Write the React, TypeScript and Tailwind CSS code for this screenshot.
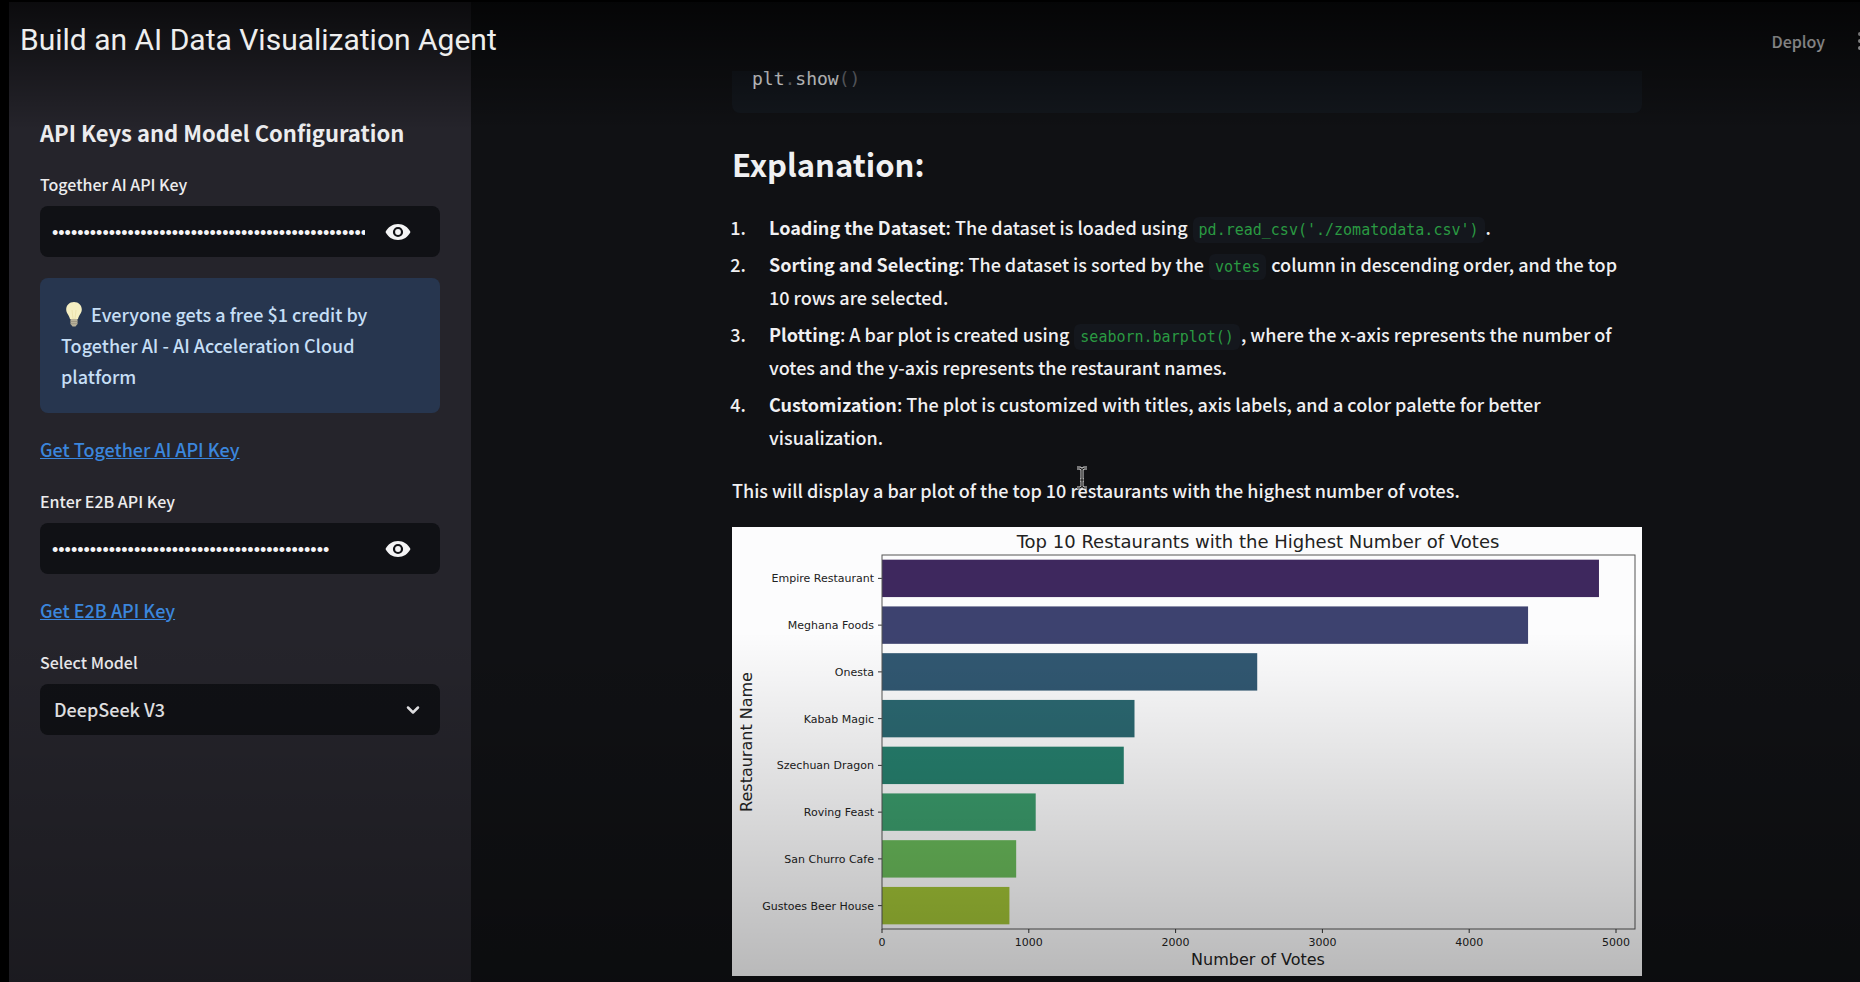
import React from "react";
import { ChevronDown } from "lucide-react";

const restaurants = [
  { name: "Empire Restaurant", votes: 4884, color: "#3e285e" },
  { name: "Meghana Foods", votes: 4401, color: "#3d426f" },
  { name: "Onesta", votes: 2556, color: "#315872" },
  { name: "Kabab Magic", votes: 1720, color: "#2b6871" },
  { name: "Szechuan Dragon", votes: 1647, color: "#26806e" },
  { name: "Roving Feast", votes: 1047, color: "#3b9c6c" },
  { name: "San Churro Cafe", votes: 914, color: "#69b95a" },
  { name: "Gustoes Beer House", votes: 868, color: "#a0c136" },
];

const PLOT = { left: 150, right: 903, top: 28, bottom: 402 };
const xScale = (votes: number) => PLOT.left + votes * 0.1468;
const band = (PLOT.bottom - PLOT.top) / restaurants.length;

function VotesChart() {
  return (
    <svg
      viewBox="0 0 910 449"
      role="img"
      aria-label="Top 10 Restaurants with the Highest Number of Votes"
      className="block w-full bg-[#fcfcfd] font-['DejaVu_Sans',sans-serif]"
      fill="#222"
    >
      <text x="526" y="21" fontSize="18" textAnchor="middle">
        Top 10 Restaurants with the Highest Number of Votes
      </text>
      {restaurants.map((r, i) => {
        const top = PLOT.top + i * band;
        return (
          <g key={r.name}>
            <rect
              x={PLOT.left}
              y={top + band * 0.1}
              width={xScale(r.votes) - PLOT.left}
              height={band * 0.8}
              fill={r.color}
            />
            <path d={`M146 ${top + band / 2}h4`} stroke="#333" />
            <text x="142" y={top + band / 2 + 4} fontSize="11" textAnchor="end">
              {r.name}
            </text>
          </g>
        );
      })}
      <rect
        x={PLOT.left}
        y={PLOT.top}
        width={PLOT.right - PLOT.left}
        height={PLOT.bottom - PLOT.top}
        fill="none"
        stroke="#555"
      />
      {[0, 1000, 2000, 3000, 4000, 5000].map((v) => (
        <g key={v}>
          <path d={`M${xScale(v)} 402v4`} stroke="#333" />
          <text x={xScale(v)} y="419" fontSize="11" textAnchor="middle">
            {v}
          </text>
        </g>
      ))}
      <text x="526" y="438" fontSize="16" textAnchor="middle">
        Number of Votes
      </text>
      <text
        x="0"
        y="0"
        fontSize="16"
        textAnchor="middle"
        transform="translate(20 215) rotate(-90)"
      >
        Restaurant Name
      </text>
    </svg>
  );
}

function EyeIcon() {
  return (
    <svg viewBox="0 0 26 18" className="block h-[18px] w-[26px]" fill="currentColor" aria-hidden="true">
      <path
        fillRule="evenodd"
        d="M.5 9C3 4 7.500 1 13 1s10 3 12.500 8C23 14 18.500 17 13 17S3 14 .5 9zM13 3.900a5.100 5.100 0 1 0 0 10.200a5.100 5.100 0 1 0 0-10.200z"
      />
      <circle cx="13" cy="9" r="2.900" />
    </svg>
  );
}

function SecretField({ id, label, length }: { id: string; label: string; length: number }) {
  return (
    <div>
      <label htmlFor={id} className="block text-[16px] leading-6 font-medium">
        {label}
      </label>
      <div className="mt-[10px] flex h-[51px] items-center rounded-lg bg-[#101115] pr-[29px] pl-3">
        <input
          id={id}
          type="password"
          defaultValue={"x".repeat(length)}
          className="min-w-0 flex-1 bg-transparent pt-1 font-['Liberation_Sans',sans-serif] text-[18px] text-[#f4f4f5] outline-none"
        />
        <button type="button" aria-label={`Show ${label}`} className="ml-5 text-[#f4f4f5]">
          <EyeIcon />
        </button>
      </div>
    </div>
  );
}

function Bulb() {
  return (
    <svg viewBox="0 0 26 26" className="inline-block size-[26px] align-[-5px]" aria-hidden="true">
      <path
        d="M13 1C8.400 1 5.200 4.300 5.200 8.600c0 3.600 2.700 5.400 3.800 9.400h8c1.100-4 3.800-5.800 3.800-9.400C20.800 4.300 17.600 1 13 1z"
        fill="#f5efc2"
      />
      <path d="M11 9l1 9h2l1-9" fill="none" stroke="#eadfa8" strokeWidth="0.8" />
      <path d="M9.500 18h7v5l-2 2.500h-3l-2-2.500z" fill="#b9b29a" />
      <path d="M9.500 20.500h7M9.500 22.700h7" stroke="#938d7c" strokeWidth="0.7" />
    </svg>
  );
}

function Sidebar() {
  return (
    <aside className="w-[462px] shrink-0 bg-[#25242b] px-[31px] pt-[112px] text-[#ececee]">
      <h2 className="text-[22px] leading-9 font-bold">API Keys and Model Configuration</h2>
      <div className="mt-[22px]">
        <SecretField id="together-key" label="Together AI API Key" length={64} />
      </div>
      <p className="mt-[21px] rounded-lg bg-[#27364f] px-[21px] py-[21px] text-[18px] leading-[31px] font-medium text-[#c5def5]">
        <Bulb /> Everyone gets a free $1 credit by Together AI - AI Acceleration Cloud platform
      </p>
      <a href="#together" className="mt-5 block text-[18px] leading-8 font-medium text-[#3b86dc] underline">
        Get Together AI API Key
      </a>
      <div className="mt-6">
        <SecretField id="e2b-key" label="Enter E2B API Key" length={44} />
      </div>
      <a href="#e2b" className="mt-5 block text-[18px] leading-8 font-medium text-[#3b86dc] underline">
        Get E2B API Key
      </a>
      <div className="mt-6">
        <label htmlFor="model" className="block text-[16px] leading-6 font-medium">
          Select Model
        </label>
        <div className="relative mt-[10px]">
          <select
            id="model"
            className="h-[51px] w-full appearance-none rounded-lg bg-[#101115] pl-[14px] text-[18px] font-medium outline-none"
          >
            <option>DeepSeek V3</option>
          </select>
          <ChevronDown
            className="pointer-events-none absolute top-4 right-[17px] size-5"
            strokeWidth={3}
            aria-hidden="true"
          />
        </div>
      </div>
    </aside>
  );
}

function Code({ children }: { children: React.ReactNode }) {
  return (
    <code className="mx-px rounded-md bg-[#14171d] px-[6px] py-1 font-['DejaVu_Sans_Mono',monospace] text-[15px] leading-none font-normal text-[#2a9a42]">
      {children}
    </code>
  );
}

function Answer() {
  return (
    <div className="mx-auto max-w-[910px] text-[18px] leading-[33px] font-medium">
      <pre className="h-[42px] rounded-b-lg bg-[#13171d] px-5 font-['DejaVu_Sans_Mono',monospace] text-[18px] leading-4 font-normal">
        plt<span className="text-[#6c6f75]">.</span>show<span className="text-[#6c6f75]">()</span>
      </pre>
      <h3 className="mt-[27px] text-[31px] leading-[48px] font-bold">Explanation:</h3>
      <ol className="mt-[23px] list-decimal space-y-1 pr-5 pl-[18px]">
        <li className="pl-[19px]">
          <strong>Loading the Dataset</strong>: The dataset is loaded using <Code>pd.read_csv('./zomatodata.csv')</Code>.
        </li>
        <li className="pl-[19px]">
          <strong>Sorting and Selecting</strong>: The dataset is sorted by the <Code>votes</Code> column in descending
          order, and the top 10 rows are selected.
        </li>
        <li className="pl-[19px]">
          <strong>Plotting</strong>: A bar plot is created using <Code>seaborn.barplot()</Code>, where the x-axis
          represents the number of votes and the y-axis represents the restaurant names.
        </li>
        <li className="pl-[19px]">
          <strong>Customization</strong>: The plot is customized with titles, axis labels, and a color palette for
          better visualization.
        </li>
      </ol>
      <div className="relative mt-5 mb-5">
        <p>This will display a bar plot of the top 10 restaurants with the highest number of votes.</p>
        <svg viewBox="0 0 12 24" className="absolute -top-2 left-[344px] h-6 w-3" aria-hidden="true">
          <path d="M1 2h3l2 1.500L8 2h3M6 3.500v17M1 22h3l2-1.500L8 22h3M4 14h4" fill="none" stroke="#ddd" strokeWidth="3" />
          <path d="M1 2h3l2 1.500L8 2h3M6 3.500v17M1 22h3l2-1.500L8 22h3M4 14h4" fill="none" stroke="#111" strokeWidth="1.200" />
        </svg>
      </div>
      <VotesChart />
    </div>
  );
}

export default function App() {
  return (
    <div className="relative flex h-screen overflow-hidden bg-black pt-[2px] pl-[9px] font-['Noto_Sans_CJK_SC','Noto_Sans',sans-serif]">
      <Sidebar />
      <main className="min-w-0 flex-1 overflow-hidden bg-[#101114] pl-[43px] text-[#f0f0f2]">
        <header className="flex h-[69px] items-center justify-end pt-[9px]">
          <button type="button" className="text-[16px] font-medium text-[#f4f4f5]">
            Deploy
          </button>
          <button type="button" aria-label="Menu" className="-mr-[2px] ml-[33px] text-[#f4f4f5]">
            <svg viewBox="0 0 4 20" className="block h-5 w-1" fill="currentColor">
              <circle cx="2" cy="3" r="2" />
              <circle cx="2" cy="10" r="2" />
              <circle cx="2" cy="17" r="2" />
            </svg>
          </button>
        </header>
        <Answer />
      </main>
      <div className="pointer-events-none absolute inset-x-0 top-0 h-[130px] bg-linear-to-b from-black/70 to-transparent" />
      <div className="pointer-events-none absolute inset-x-0 bottom-0 h-[350px] bg-linear-to-t from-black/27 to-transparent" />
      <h1 className="absolute top-5 left-5 font-['Roboto',sans-serif] text-[30px] leading-10 text-[#eeeeee]">
        Build an AI Data Visualization Agent
      </h1>
    </div>
  );
}
